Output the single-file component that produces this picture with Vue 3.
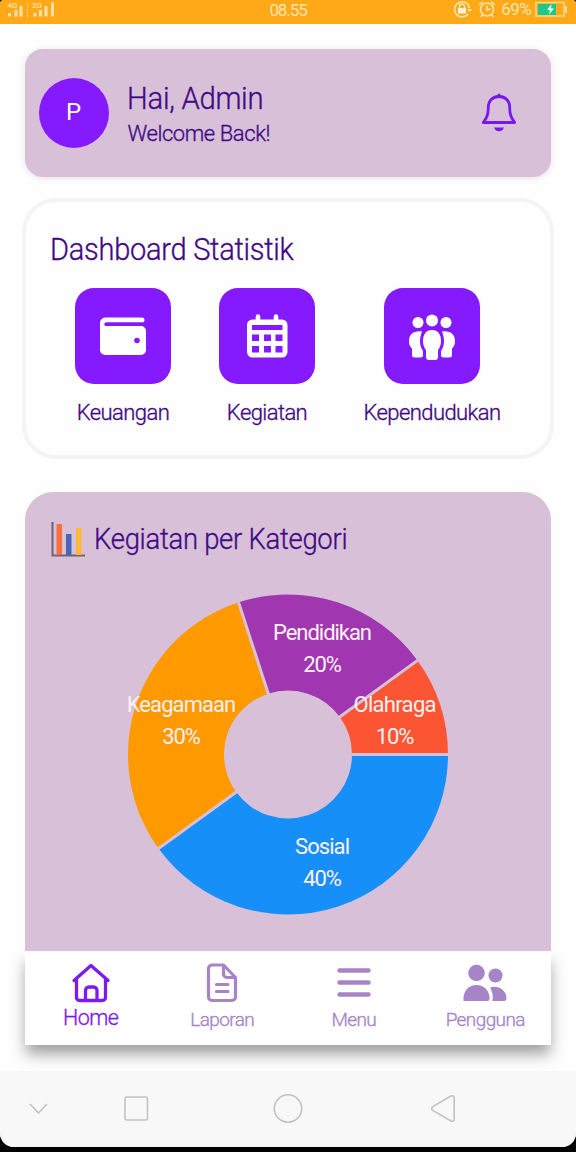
<script setup>
const CX = 160
const CY = 160
const R = 160
const HOLE = 64
const slices = [
  { name: 'Sosial', value: 40, color: '#178ff9', x: 194.5, y: 91, w: 55 },
  { name: 'Keagamaan', value: 30, color: '#ff9900', x: 53.5, y: -51, w: 109.5 },
  { name: 'Pendidikan', value: 20, color: '#a037b0', x: 194.5, y: -123, w: 99 },
  { name: 'Olahraga', value: 10, color: '#fc5533', x: 267, y: -51, w: 83 },
]
let start = 0
const point = (r, a) => `${(CX + r * Math.cos(a)).toFixed(2)} ${(CY + r * Math.sin(a)).toFixed(2)}`
const arcs = slices.map((s) => {
  const a = (start / 100) * Math.PI * 2
  start += s.value
  const b = (start / 100) * Math.PI * 2
  return {
    ...s,
    labelY: s.y + 160,
    d: `M${point(R, a)}A${R} ${R} 0 0 1 ${point(R, b)}L${point(HOLE, b)}A${HOLE} ${HOLE} 0 0 0 ${point(HOLE, a)}Z`,
    edge: `M${point(HOLE - 1, a)}L${point(R + 1, a)}`,
  }
})
</script>

<template>
  <div class="phone">
    <header class="status">
      <svg class="signal" width="56" height="23" viewBox="0 0 56 23" fill="#ffe3ae">
        <text x="7.500" y="7.500" font-size="8">4G</text>
        <text x="32" y="7.500" font-size="8">2G</text>
        <rect x="8" y="13" width="3" height="3.500" /><rect x="14.500" y="10" width="3" height="6.500" />
        <rect x="19.500" y="6" width="3" height="10.500" />
        <path d="M27.500 3v14" stroke="#ffd286" stroke-dasharray="2 1" />
        <rect x="33.500" y="13" width="3" height="3.500" /><rect x="39" y="10" width="3" height="6.500" />
        <rect x="44.500" y="6" width="3" height="10.500" /><rect x="51" y="2.500" width="3" height="14" />
      </svg>
      <span class="clock">08.55</span>
      <div class="right">
        <svg width="20" height="18" viewBox="0 0 20 18" fill="none" stroke="#ffe3ae" stroke-width="1.500">
          <path d="M15 14A7.500 7.500 0 1 1 16.500 8" />
          <path d="M14.200 9h5l-2.500 3z" fill="#ffe3ae" stroke="none" />
          <rect x="5" y="8" width="8" height="5.500" fill="#fff3dc" stroke="none" />
          <path d="M6.500 8V6.500a2.500 2.500 0 0 1 5 0V8" />
        </svg>
        <svg class="alarm" width="18" height="18" viewBox="0 0 18 18" fill="none" stroke="#ffe3ae" stroke-width="1.500" stroke-linecap="round">
          <circle cx="9" cy="9.500" r="6.500" /><path d="M9 6v4l3-1M1.500 4.500l3-2.500M16.500 4.500l-3-2.500M4.500 14.500L3 16.500M13.500 14.500l1.500 2" />
        </svg>
        <span class="pct">69%</span>
        <svg width="34" height="18" viewBox="0 0 34 18">
          <rect x="1" y="2.500" width="28" height="13.500" fill="none" stroke="#ffd98f" stroke-width="1.500" />
          <path d="M31 6v7" stroke="#ffd98f" stroke-width="2" />
          <rect x="3" y="4" width="18" height="11" fill="#1dc987" />
          <path d="M16.500 4l-4.500 6h3l-1 4.500 5-6h-3z" fill="#f2fff4" />
        </svg>
      </div>
    </header>

    <main class="content">
      <section class="hello">
        <div class="avatar">P</div>
        <div class="greet">
          <h1>Hai, Admin</h1>
          <p>Welcome Back!</p>
        </div>
        <svg class="bell" width="36" height="42" viewBox="0 0 36 42" fill="none" stroke="#7a17ee" stroke-width="2.800" stroke-linejoin="round">
          <path d="M18 4.500c-6.500 0-10.700 4.500-10.700 11 0 8-1.800 10.500-5 15h31.400c-3.200-4.500-5-7-5-15 0-6.500-4.200-11-10.700-11z" />
          <path d="M14.800 4.500L18 1.200l3.200 3.300z" fill="#7a17ee" stroke="none" />
          <path d="M13 35.500h10c-1 2.800-2.900 3.700-5 3.700s-4-.9-5-3.700z" fill="#7a17ee" stroke="none" />
        </svg>
      </section>

      <section class="stats">
        <h2>Dashboard Statistik</h2>
        <div class="tiles">
          <div class="tile t1">
            <div class="box">
              <svg width="48" height="48" viewBox="0 0 48 48">
                <path d="M7 5.500h36a2.500 2.500 0 0 1 0 5H7a1.600 1.600 0 0 0 0 3.500h35a5 5 0 0 1 5 5v19a5 5 0 0 1-5 5H6a5 5 0 0 1-5-5v-27a5.500 5.500 0 0 1 6-5.500z" fill="#fff" />
                <path d="M7.500 10.500h36v3.300h-36a1.600 1.600 0 0 1 0-3.300z" fill="#8519ff" />
                <circle cx="38" cy="28.500" r="2.800" fill="#8519ff" />
              </svg>
            </div>
            <span class="l1">Keuangan</span>
          </div>
          <div class="tile t2">
            <div class="box">
              <svg width="48" height="48" viewBox="0 0 48 48">
                <path d="M15 4.500v6M33 4.500v6" stroke="#fff" stroke-width="4.600" stroke-linecap="round" />
                <rect x="4" y="7.500" width="40.500" height="38" rx="5.500" fill="#fff" />
                <path d="M9 13h30.500v5H9zM9 22.500h7v6.500H9zM21 22.500h7v6.500h-7zM32.500 22.500h7v6.500h-7zM9 34h7v6.500H9zM21 34h7v6.500h-7zM32.500 34h7v6.500h-7z" fill="#8519ff" />
              </svg>
            </div>
            <span class="l2">Kegiatan</span>
          </div>
          <div class="tile t3">
            <div class="box">
              <svg width="48" height="48" viewBox="0 0 48 48" fill="#fff">
                <circle cx="24" cy="8.500" r="6" /><circle cx="10" cy="10.500" r="5.500" /><circle cx="38" cy="10.500" r="5.500" />
                <path d="M14 19.500C5 18.500 1 23 1 29c0 4 1.300 6 3 7.500V43q0 2.500 2.500 2.500h6q2.500 0 2.500-2.500v-4c-2-3-3-6-3-9.500 0-4 .8-7 2-10z" />
                <path d="M34 19.500c9-1 13 3.500 13 9.500 0 4-1.300 6-3 7.500V43q0 2.500-2.500 2.500h-6Q33 45.500 33 43v-4c2-3 3-6 3-9.500 0-4-.8-7-2-10z" />
                <path d="M24 18c-6 0-9 4.500-9 11 0 4.500 1.500 7 3 9v7q0 3 3 3h6q3 0 3-3v-7c1.500-2 3-4.500 3-9 0-6.500-3-11-9-11z" />
              </svg>
            </div>
            <span class="l3">Kependudukan</span>
          </div>
        </div>
      </section>

      <section class="category">
        <h2>
          <svg width="34" height="35" viewBox="0 0 34 35">
            <path d="M1.500 0v33.500H34" fill="none" stroke="#6d6478" stroke-width="2" />
            <rect x="5.500" y="2" width="5.500" height="31" fill="#f9703c" />
            <rect x="15" y="12" width="5.500" height="21" fill="#4667b5" />
            <rect x="25" y="6" width="5.500" height="27" fill="#fbb936" />
          </svg>
          <span>Kegiatan per Kategori</span>
        </h2>
        <svg class="donut" width="324" height="321" viewBox="-2 -.5 324 321">
          <path v-for="a in arcs" :key="a.name" :d="a.d" :fill="a.color" />
          <path v-for="a in arcs" :key="a.color" :d="a.edge" stroke="#d8c1d8" stroke-width="3" />
          <g v-for="a in arcs" :key="a.value" class="label">
            <text :x="a.x" :y="a.labelY + 8.500" :textLength="a.w">{{ a.name }}</text>
            <text :x="a.x" :y="a.labelY + 40.500" textLength="38.500">{{ a.value }}%</text>
          </g>
        </svg>
      </section>

      <nav class="tabs">
        <a class="on">
          <svg width="40" height="40" viewBox="0 0 40 40" fill="none" stroke="#7d1af0" stroke-width="3.300" stroke-linecap="round" stroke-linejoin="round">
            <path d="M3 17.500L20 2.500l17 15M5.500 16v18.500a3 3 0 0 0 3 3h23a3 3 0 0 0 3-3V16M14.500 37V27.500A3.500 3.500 0 0 1 18 24h4.500a3.500 3.500 0 0 1 3.500 3.500V37" />
          </svg>
          <span class="n1">Home</span>
        </a>
        <a>
          <svg width="40" height="40" viewBox="0 0 40 40" fill="none" stroke="#a784c8" stroke-width="3.200" stroke-linecap="round" stroke-linejoin="round">
            <path d="M21.500 2H10a3.500 3.500 0 0 0-3.500 3.500V34a3.500 3.500 0 0 0 3.500 3.500h20a3.500 3.500 0 0 0 3.500-3.500V14.500zM21.500 2v9a3.500 3.500 0 0 0 3.500 3.500h8.500M14.500 21.500h11.500M14.500 28.500h11.500" />
          </svg>
          <span class="n2">Laporan</span>
        </a>
        <a>
          <svg width="40" height="40" viewBox="0 0 40 40" stroke="#a784c8" stroke-width="4.500" stroke-linecap="round">
            <path d="M5.500 7.500h29M5.500 19.500h29M5.500 31.500h29" />
          </svg>
          <span class="n3">Menu</span>
        </a>
        <a>
          <svg width="44" height="40" viewBox="0 0 44 40" fill="#a784c8">
            <circle cx="13.500" cy="10" r="8.300" /><circle cx="32.500" cy="12.500" r="7" />
            <path d="M.5 38V34C1.500 26 7 22 13.500 22s12 4 13 12v1.500q0 2.500-2.500 2.500z" />
            <path d="M27 24.500c8-2.500 16 2.500 16.500 10.500q0 3-2.500 3H29.500c1-5.500-.5-10-2.500-13.500z" />
          </svg>
          <span class="n4">Pengguna</span>
        </a>
      </nav>
    </main>

    <footer class="system">
      <svg width="576" height="76" viewBox="0 0 576 76" fill="none" stroke="#c2c2c2" stroke-width="1.600" stroke-linejoin="round">
        <path d="M30 33l8.500 9L47 33" />
        <rect x="125" y="26" width="22.500" height="23" rx="2" />
        <circle cx="288" cy="37.500" r="13.700" />
        <path d="M432.800 35.600l17.700-10.300q3.700-1.600 3.700 2.200v20q0 3.800-3.700 2.200l-17.700-10.300q-2.400-1.900 0-3.800z" />
      </svg>
    </footer>
  </div>
</template>

<style>
body { background: #000; }
</style>
<style scoped>
* { box-sizing: border-box; }
.phone { width: 576px; height: 1147px; overflow: hidden; display: flex; flex-direction: column; background: #fefefe; border-radius: 4px 4px 14px 14px; font-family: Roboto, "Liberation Sans", sans-serif; font-weight: 300; color: #420a84; }
h1, h2, p { margin: 0; font-weight: 300; }
h1, h2, p, .tile span, .tabs span { -webkit-text-stroke: .35px currentColor; }
.status { height: 23.500px; flex: none; background: #ffa919; display: grid; grid-template-columns: 1fr auto 1fr; color: #ffe3ae; }
.status .signal { font-weight: 500; }
.clock { font-size: 17px; line-height: 21px; font-weight: 400; letter-spacing: -1.100px; }
.right { display: flex; justify-content: flex-end; padding-right: 7px; font-weight: 400; }
.alarm { margin-left: 5px; }
.pct { font-size: 17px; line-height: 19px; letter-spacing: -.6px; margin: 0 4px 0 5px; }
.content { flex: 1; padding: 25.500px 25px 0; display: flex; flex-direction: column; }
.hello { height: 128px; flex: none; background: #d8c1d8; border-radius: 18px; box-shadow: 0 1px 6px rgba(80, 50, 80, .14); display: flex; align-items: center; padding: 0 34px 0 13.500px; }
.avatar { width: 70px; height: 70px; border-radius: 50%; background: #8519ff; color: #fff; font-size: 24px; font-weight: 400; line-height: 69px; text-align: center; }
.greet { flex: 1; padding-left: 18px; }
.greet h1 { font-size: 32px; line-height: 38px; letter-spacing: -.3px; transform: scaleX(.915); transform-origin: left; }
.greet p { font-size: 22px; line-height: 28px; letter-spacing: -.42px; margin: 3px 0 0 1px; }
.stats { height: 261px; flex: none; margin: 21px -3px 0; border: 4.500px solid #f4f4f4; border-radius: 34px; padding: 28px 0 0 24px; background: #fefefe; }
.stats h2 { font-size: 31px; line-height: 40px; letter-spacing: -.3px; transform: scaleX(.937); transform-origin: left; }
.tiles { display: flex; margin-top: 18px; }
.tile { width: 96px; display: flex; flex-direction: column; align-items: center; white-space: nowrap; font-size: 22px; line-height: 26px; }
.t1 { margin-left: 25px; }
.t2 { margin-left: 48px; }
.t3 { margin-left: 69px; }
.tile span { margin-top: 16.500px; letter-spacing: -.58px; }
.box { width: 96px; height: 95.500px; background: #8519ff; border-radius: 19px; display: grid; place-items: center; flex: none; }
.category { height: 459px; flex: none; margin-top: 33px; background: #d8c1d8; border-radius: 28px 28px 0 0; display: flex; flex-direction: column; align-items: center; }
.category h2 { align-self: stretch; display: flex; align-items: center; gap: 9px; padding: 29px 0 0 26px; font-size: 30px; line-height: 36px; letter-spacing: -.3px; }
.category h2 span { transform: scaleX(.915); transform-origin: left; }
.donut { margin-top: 37px; overflow: visible; }
.label text { font-size: 22px; font-weight: 400; fill: #fff0f4; text-anchor: middle; }
.tabs { height: 93.500px; flex: none; background: #fff; display: grid; grid-template-columns: repeat(4, 1fr); box-shadow: 0 10px 14px -1px rgba(0, 0, 0, .38); clip-path: inset(0 -30px -40px -30px); }
.tabs a { display: flex; flex-direction: column; align-items: center; padding-top: 11.500px; color: #a784c8; font-size: 19px; line-height: 24px; letter-spacing: -.6px; }
.tabs svg { flex: none; }
.tabs span { margin-top: 5px; }
.tabs .on { color: #7d1af0; font-size: 21.500px; letter-spacing: -.5px; }
.tabs .on span { margin-top: 3px; }
.system { position: relative; height: 76px; flex: none; background: #f8f8f8; }
.system svg { display: block; }
</style>
